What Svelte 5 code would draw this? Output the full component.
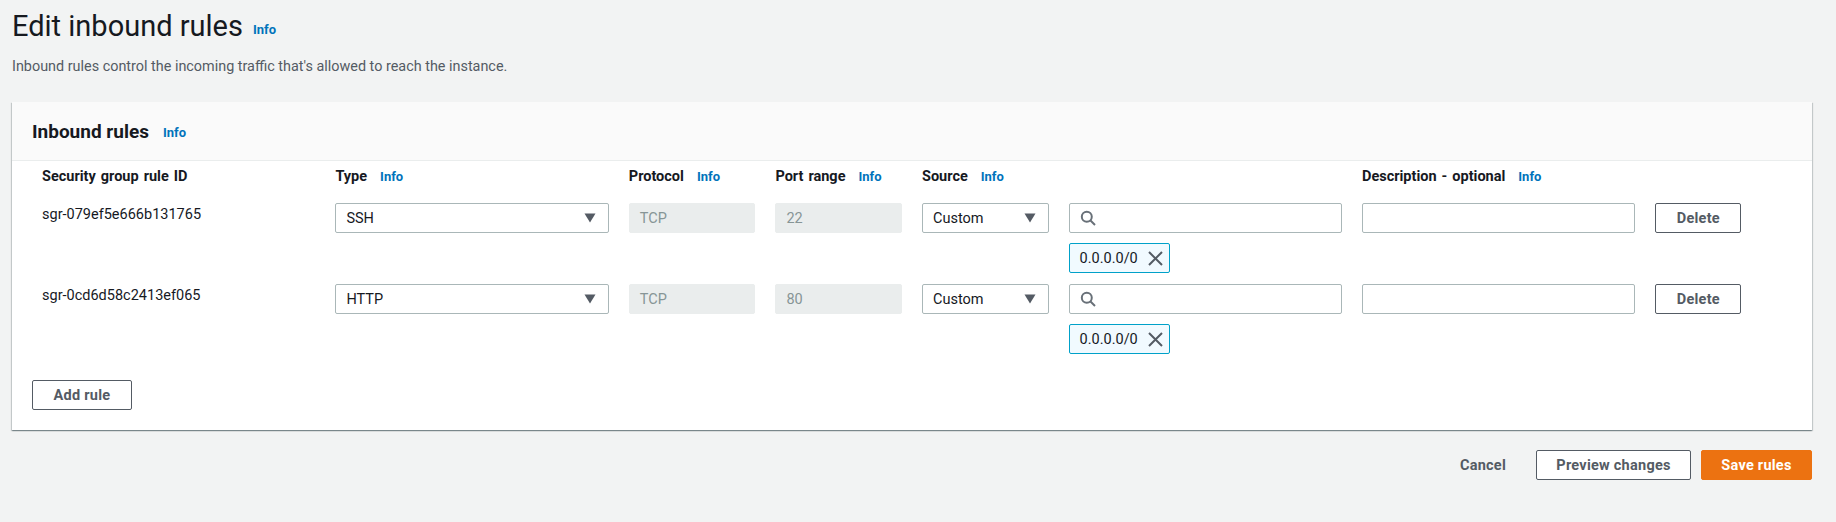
<script>
  const rules = [
    { id: "sgr-079ef5e666b131765", type: "SSH", protocol: "TCP", port: "22" },
    { id: "sgr-0cd6d58c2413ef065", type: "HTTP", protocol: "TCP", port: "80" },
  ];
</script>

{#snippet caret()}
  <svg class="caret" width="12" height="10" viewBox="0 0 12 10"><path d="M0.5 0.5h11L6 9.5z" fill="#545b64" /></svg>
{/snippet}

<div class="page">
  <div class="title">
    <h1>Edit inbound rules</h1>
    <a href="#info">Info</a>
  </div>
  <p class="lead">Inbound rules control the incoming traffic that's allowed to reach the instance.</p>

  <section class="panel">
    <header class="panel-head">
      <h2>Inbound rules</h2>
      <a href="#info">Info</a>
    </header>

    <div class="editor">
      <div class="grid labels">
        <div class="label">Security group rule ID</div>
        <div class="label">Type <a href="#info">Info</a></div>
        <div class="label">Protocol <a href="#info">Info</a></div>
        <div class="label">Port range <a href="#info">Info</a></div>
        <div class="label">Source <a href="#info">Info</a></div>
        <div></div>
        <div class="label">Description - optional <a href="#info">Info</a></div>
        <div></div>
      </div>

      {#each rules as rule}
        <div class="grid row">
          <div class="rule-id">{rule.id}</div>
          <div class="field select"><span>{rule.type}</span>{@render caret()}</div>
          <div class="field disabled">{rule.protocol}</div>
          <div class="field disabled">{rule.port}</div>
          <div class="field select"><span>Custom</span>{@render caret()}</div>
          <div class="source">
            <div class="field search">
              <svg width="16" height="16" viewBox="0 0 16 16" fill="none" stroke="#687078" stroke-width="2">
                <circle cx="6.8" cy="6.8" r="5" />
                <path d="M10.5 10.5L15 15" />
              </svg>
            </div>
            <div class="token">
              <span>0.0.0.0/0</span>
              <svg width="15" height="15" viewBox="0 0 15 15" fill="none" stroke="#545b64" stroke-width="2">
                <path d="M1 1l13 13M14 1L1 14" />
              </svg>
            </div>
          </div>
          <div class="field"></div>
          <button class="btn">Delete</button>
        </div>
      {/each}

      <button class="btn add">Add rule</button>
    </div>
  </section>

  <div class="actions">
    <button class="btn link">Cancel</button>
    <button class="btn preview">Preview changes</button>
    <button class="btn primary">Save rules</button>
  </div>
</div>

<style>
  :global(body) {
    background: #f2f3f3;
    font-family: Roboto, "Noto Sans", sans-serif;
    color: #16191f;
  }

  .page {
    height: 522px;
    box-sizing: border-box;
    padding: 0 24px 0 12px;
    font-size: 14.5px;
  }

  a {
    color: #0073bb;
    font-size: 13px;
    font-weight: 700;
    text-decoration: none;
  }

  .title {
    display: flex;
    align-items: center;
    gap: 10px;
    height: 52px;
  }

  h1 {
    margin: 0;
    font-size: 29px;
    font-weight: 400;
    line-height: 52px;
  }

  .title a {
    padding-top: 7px;
  }

  .lead {
    margin: 0;
    height: 50px;
    padding-top: 5px;
    box-sizing: border-box;
    line-height: 20px;
    font-size: 14.4px;
    color: #545b64;
  }

  .panel {
    background: #fff;
    height: 328px;
    box-shadow: 0 1px 1px 0 rgba(0, 28, 36, 0.3), 1px 1px 1px 0 rgba(0, 28, 36, 0.15), -1px 1px 1px 0 rgba(0, 28, 36, 0.15);
  }

  .panel-head {
    display: flex;
    align-items: center;
    gap: 14px;
    height: 58px;
    padding-left: 20px;
    background: #fafafa;
    border-bottom: 1px solid #eaeded;
  }

  h2 {
    margin: 0;
    font-size: 19px;
    font-weight: 700;
  }

  .panel-head a {
    padding-top: 2px;
  }

  .editor {
    padding: 0 0 0 20px;
  }

  .grid {
    display: grid;
    grid-template-columns: 273.4px 273.4px 126.6px 126.6px 126.6px 273.4px 273.4px 86px;
    column-gap: 20px;
    padding-left: 10px;
  }

  .labels {
    height: 42px;
    align-items: center;
    padding-bottom: 10px;
    box-sizing: border-box;
  }

  .label {
    font-weight: 700;
    line-height: 20px;
    word-spacing: 1.4px;
  }

  .label a {
    margin-left: 8px;
  }

  .row {
    height: 81px;
  }

  .rule-id {
    padding-top: 2px;
    line-height: 20px;
  }

  .field {
    display: flex;
    align-items: center;
    justify-content: space-between;
    box-sizing: border-box;
    height: 30px;
    padding: 0 10px;
    background: #fff;
    border: 1px solid #aab7b8;
    border-radius: 2px;
  }

  .select .caret {
    margin-right: 2px;
  }

  .disabled {
    background: #eaeded;
    border-color: #eaeded;
    color: #879596;
  }

  .search {
    justify-content: flex-start;
  }

  .token {
    display: flex;
    align-items: center;
    justify-content: space-between;
    box-sizing: border-box;
    width: 101px;
    height: 30px;
    margin-top: 10px;
    padding: 0 6px 0 10px;
    background: #f1faff;
    border: 1px solid #00a1c9;
    border-radius: 2px;
  }

  .btn {
    box-sizing: border-box;
    height: 30px;
    padding: 0;
    background: #fff;
    border: 1px solid #545b64;
    border-radius: 2px;
    color: #545b64;
    font: 700 14.5px Roboto, "Noto Sans", sans-serif;
    letter-spacing: 0.25px;
  }

  .add {
    display: block;
    width: 100px;
    margin-top: 15px;
  }

  .actions {
    display: flex;
    justify-content: flex-end;
    align-items: center;
    gap: 10px;
    margin-top: 20px;
  }

  .link {
    width: 86px;
    background: none;
    border: none;
  }

  .preview {
    width: 155px;
  }

  .primary {
    width: 111px;
    background: #ec7211;
    border-color: #ec7211;
    color: #fff;
  }
</style>
